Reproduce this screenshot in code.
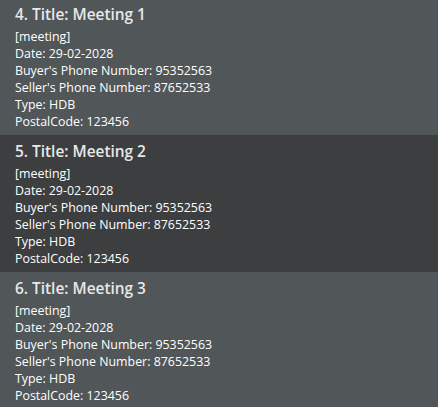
import React from "react";

const meetings = [
  { idx: 4, title: "Meeting 1" },
  { idx: 5, title: "Meeting 2" },
  { idx: 6, title: "Meeting 3" },
];

const MeetingCard = ({ idx, title, odd }: { idx: number; title: string; odd: boolean }) => {
  return (
    <div className={`h-[137px] pl-[15px] pt-[5px] ${odd ? "bg-[#3c3e3f]" : "bg-[#515658]"}`}>
      <div className="text-[15.4px] leading-[24px] font-semibold text-[#e8e8e8]">
        {idx}. Title: {title}
      </div>
      <div className="text-[12.4px] leading-[17px] mt-[1px] text-white">
        <div>[meeting]</div>
        <div>Date: 29-02-2028</div>
        <div>Buyer's Phone Number: 95352563</div>
        <div>Seller's Phone Number: 87652533</div>
        <div>Type: HDB</div>
        <div>PostalCode: 123456</div>
      </div>
    </div>
  );
};

const App = () => {
  return (
    <div className="w-[438px] h-[407px] overflow-hidden bg-[#515658] font-['Open_Sans',sans-serif]">
      <div className="-mt-[2px]">
        {meetings.map((m, i) => (
          <MeetingCard key={m.idx} idx={m.idx} title={m.title} odd={i % 2 === 1} />
        ))}
      </div>
    </div>
  );
};

export default App;
